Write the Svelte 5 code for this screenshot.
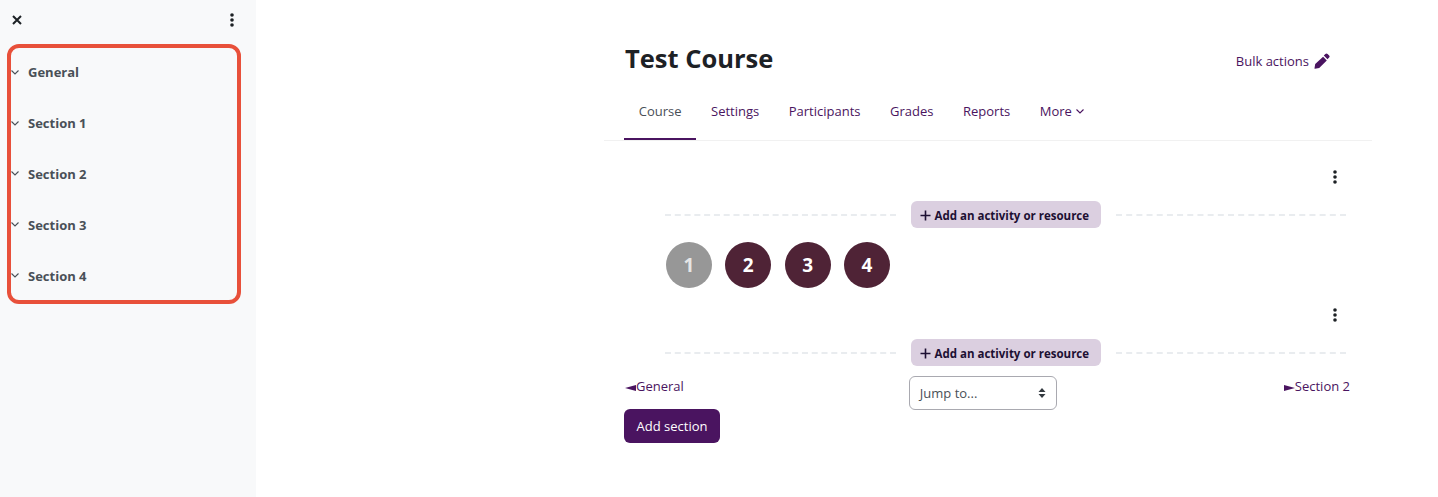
<script>
  const sections = ["General", "Section 1", "Section 2", "Section 3", "Section 4"];
  const tabs = ["Settings", "Participants", "Grades", "Reports"];
  const steps = [
    { n: 1, done: true },
    { n: 2, done: false },
    { n: 3, done: false },
    { n: 4, done: false }
  ];
</script>

{#snippet dots()}
  <svg class="dots" width="4" height="14" viewBox="0 0 4 14" fill="#1d2125">
    <circle cx="2" cy="2" r="1.8" />
    <circle cx="2" cy="7" r="1.8" />
    <circle cx="2" cy="12" r="1.8" />
  </svg>
{/snippet}

{#snippet addActivity()}
  <div class="add-row">
    <span class="dash"></span>
    <button class="add-btn" type="button">
      <svg width="11" height="11" viewBox="0 0 11 11" stroke="#1d1033" stroke-width="1.6" fill="none">
        <path d="M5.5 0.5v10M0.5 5.5h10" />
      </svg>
      Add an activity or resource
    </button>
    <span class="dash"></span>
  </div>
{/snippet}

<div class="page">
  <aside class="drawer">
    <div class="drawer-head">
      <svg width="10" height="10" viewBox="0 0 10 10" stroke="#1d2125" stroke-width="2" fill="none">
        <path d="M1 1l8 8M9 1l-8 8" />
      </svg>
      {@render dots()}
    </div>
    <ul class="outline">
      {#each sections as s}
        <li>
          <svg width="8" height="5" viewBox="0 0 8 5" stroke="#495057" stroke-width="1.1" fill="none">
            <path d="M0.5 0.5l3.5 3.5l3.5-3.5" />
          </svg>
          <span>{s}</span>
        </li>
      {/each}
    </ul>
  </aside>

  <main class="content">
    <header class="title-row">
      <h1>Test Course</h1>
      <a class="bulk" href="#bulk">
        Bulk actions
        <svg width="16" height="16" viewBox="0 0 16 16" fill="#4a1460">
          <path d="M11.4 0.9a1.6 1.6 0 0 1 2.2 0l1.5 1.5a1.6 1.6 0 0 1 0 2.2l-1.6 1.6l-3.7-3.7zM9.1 3.7l3.7 3.7l-7.6 7.6l-4.2 0.7a0.5 0.5 0 0 1-0.5-0.5l0.7-4.3z" />
        </svg>
      </a>
    </header>

    <nav class="tabs">
      <a class="tab active" href="#course">Course</a>
      {#each tabs as t}
        <a class="tab" href="#tab">{t}</a>
      {/each}
      <a class="tab" href="#more">
        More
        <svg width="8" height="5" viewBox="0 0 8 5" stroke="#4a1460" stroke-width="1.1" fill="none">
          <path d="M0.5 0.5l3.5 3.5l3.5-3.5" />
        </svg>
      </a>
    </nav>

    <section class="block first">
      <div class="menu-row">{@render dots()}</div>
      {@render addActivity()}
    </section>

    <div class="steps">
      {#each steps as step}
        <span class="step" class:done={step.done}>{step.n}</span>
      {/each}
    </div>

    <section class="block second">
      <div class="menu-row">{@render dots()}</div>
      {@render addActivity()}
    </section>

    <div class="pager">
      <a href="#general">
        <svg class="back" width="11" height="6" viewBox="0 0 11 6" fill="#4a1460"><path d="M0 3l11-3v6z" /></svg>General
      </a>
      <button class="jump" type="button">
        Jump to...
        <svg width="8" height="10" viewBox="0 0 8 10" fill="#343a40">
          <path d="M4 0l3.5 4h-7zM4 10l-3.5-4h7z" />
        </svg>
      </button>
      <a href="#section-2">
        <svg width="11" height="6" viewBox="0 0 11 6" fill="#4a1460"><path d="M11 3l-11-3v6z" /></svg>Section 2
      </a>
    </div>

    <button class="add-section" type="button">Add section</button>
  </main>
</div>

<style>
  :global(body) {
    background: #fff;
    font-family: "Open Sans", "Noto Sans", sans-serif;
    overflow: hidden;
  }

  .page {
    display: flex;
    height: 497px;
  }

  .drawer {
    width: 256px;
    flex: none;
    background: #f8f9fa;
    box-sizing: border-box;
    padding: 13px 7px 0;
  }

  .drawer-head {
    display: flex;
    justify-content: space-between;
    align-items: center;
    height: 14px;
    padding: 0 15px 0 5px;
    margin-bottom: 17px;
  }

  .outline {
    list-style: none;
    margin: 0;
    padding: 0;
    width: 234px;
    height: 260px;
    box-sizing: border-box;
    border: 4px solid #e8503a;
    border-radius: 12px;
  }

  .outline li {
    display: flex;
    align-items: center;
    box-sizing: border-box;
    height: 50.8px;
    padding-bottom: 2px;
    color: #495057;
    font-size: 13px;
    font-weight: 700;
  }

  .outline svg {
    margin-right: 9px;
  }

  .content {
    width: 768px;
    flex: none;
    margin-left: 348px;
    box-sizing: border-box;
    padding: 0 20px;
  }

  .title-row {
    display: flex;
    justify-content: space-between;
    align-items: center;
    height: 38px;
    padding: 40px 22px 0 0;
  }

  h1 {
    margin: 0 0 2px 1px;
    color: #1d2125;
    font-size: 25.5px;
    font-weight: 700;
  }

  a {
    color: #4a1460;
    text-decoration: none;
    font-size: 13px;
  }

  .bulk {
    display: flex;
    align-items: center;
    gap: 5px;
    margin-top: 4px;
  }

  .tabs {
    display: flex;
    margin: 0 -20px;
    padding: 0 20px;
    height: 62px;
    border-bottom: 1px solid #f1f1f1;
  }

  .tab {
    display: flex;
    align-items: center;
    gap: 4px;
    padding: 6px 14.75px 0;
    border-bottom: 2px solid transparent;
  }

  .tab.active {
    color: #495057;
    border-bottom-color: #4a1460;
  }

  .block {
    padding-left: 41px;
    padding-right: 6px;
  }

  .block.first {
    padding-top: 29px;
  }

  .block.second {
    padding-top: 20px;
  }

  .menu-row {
    display: flex;
    justify-content: flex-end;
    padding-right: 9px;
    height: 16px;
  }

  .add-row {
    display: flex;
    align-items: center;
    gap: 15px;
    margin-top: 15px;
  }

  .dash {
    flex: 1;
    border-top: 2px dashed #e9ecef;
  }

  .add-btn {
    display: flex;
    align-items: center;
    gap: 4px;
    width: 190px;
    height: 27px;
    padding: 1px 0 0 9px;
    box-sizing: border-box;
    border: 0;
    border-radius: 6px;
    background: #dbcfe0;
    color: #1d1033;
    font-family: inherit;
    font-size: 11.5px;
    font-weight: 700;
    white-space: nowrap;
  }

  .steps {
    display: flex;
    gap: 13.3px;
    padding: 14px 0 0 42px;
  }

  .step {
    width: 46px;
    height: 46px;
    border-radius: 50%;
    background: #4f2336;
    color: #fff;
    font-size: 19px;
    font-weight: 700;
    display: flex;
    align-items: center;
    justify-content: center;
  }

  .step.done {
    background: #979797;
    color: #e6e6e6;
  }

  .pager {
    display: flex;
    justify-content: space-between;
    align-items: flex-start;
    padding: 10px 2px 0 0;
    line-height: 20px;
  }

  .back {
    margin-left: 1px;
  }

  .jump {
    display: flex;
    align-items: center;
    justify-content: space-between;
    width: 148px;
    height: 34px;
    box-sizing: border-box;
    margin-right: 2px;
    padding: 0 10px;
    background: #fff;
    border: 1px solid #a9a9b0;
    border-radius: 6px;
    color: #495057;
    font-family: inherit;
    font-size: 13px;
  }

  .add-section {
    display: block;
    margin-top: -1px;
    width: 96px;
    height: 34px;
    border: 0;
    border-radius: 6px;
    background: #4a1460;
    color: #fff;
    font-family: inherit;
    font-size: 13px;
  }
</style>
